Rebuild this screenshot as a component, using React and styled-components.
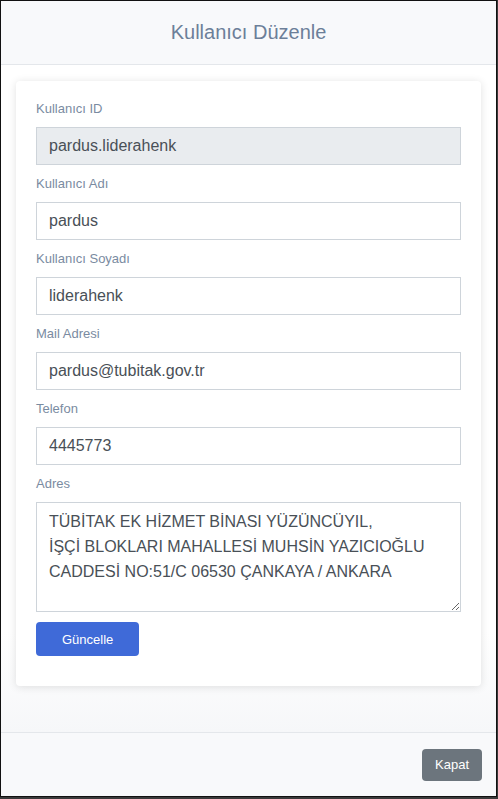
import React from 'react';
import styled, { createGlobalStyle } from 'styled-components';

const GlobalStyle = createGlobalStyle`
  html, body {
    margin: 0;
    padding: 0;
    background: #3a3a3a;
    font-family: "Liberation Sans", Arial, sans-serif;
  }
`;

const Modal = styled.div`
  width: 495px;
  height: 795px;
  background: #fff;
  border: 1px solid #111;
  display: flex;
  flex-direction: column;
  overflow: hidden;
`;

const Header = styled.div`
  height: 63px;
  flex: none;
  background: #f8f9fb;
  border-bottom: 1px solid #e4e7eb;
  display: flex;
  align-items: center;
  justify-content: center;
`;

const Title = styled.h2`
  margin: 0;
  font-size: 20px;
  font-weight: 400;
  color: #6c7f99;
`;

const Body = styled.div`
  flex: 1;
  min-height: 0;
  padding: 16px 15px 0 15px;
  background: linear-gradient(#fff 85%, #f6f7f9);
`;

const Card = styled.form`
  background: #fff;
  border-radius: 4px;
  box-shadow: 0 1px 8px rgba(0, 0, 0, 0.12);
  padding: 18px 20px 30px 20px;
  display: flex;
  flex-direction: column;
  align-items: flex-start;
`;

const Field = styled.div`
  align-self: stretch;
  display: flex;
  flex-direction: column;
  margin-bottom: ${({ last }) => (last ? 10 : 9)}px;
`;

const Label = styled.label`
  font-size: 13px;
  line-height: 20px;
  color: #7a8ba1;
  margin-bottom: 8px;
`;

const Input = styled.input`
  box-sizing: border-box;
  height: 38px;
  width: 100%;
  padding: 0 12px;
  font-family: inherit;
  font-size: 16px;
  color: #495057;
  background: ${({ disabled }) => (disabled ? '#e9ecef' : '#fff')};
  border: 1px solid #ced4da;
  border-radius: 0;
  outline: none;
`;

const TextArea = styled.textarea`
  box-sizing: border-box;
  height: 110px;
  width: 100%;
  padding: 6px 12px;
  font-family: inherit;
  font-size: 16px;
  line-height: 25px;
  color: #495057;
  border: 1px solid #ced4da;
  border-radius: 0;
  outline: none;
  resize: vertical;
`;

const Button = styled.button`
  height: ${({ h }) => h}px;
  padding: 0 ${({ px }) => px}px;
  border: none;
  border-radius: 4px;
  background: ${({ bg }) => bg};
  color: #fff;
  font-family: inherit;
  font-size: 13px;
  cursor: pointer;
`;

const Footer = styled.div`
  height: 63px;
  flex: none;
  background: #f8f9fb;
  border-top: 1px solid #e4e7eb;
  display: flex;
  align-items: center;
  justify-content: flex-end;
  padding: 0 14px;
`;

const fields = [
  { label: 'Kullanıcı ID', value: 'pardus.liderahenk', disabled: true },
  { label: 'Kullanıcı Adı', value: 'pardus' },
  { label: 'Kullanıcı Soyadı', value: 'liderahenk' },
  { label: 'Mail Adresi', value: 'pardus@tubitak.gov.tr' },
  { label: 'Telefon', value: '4445773' },
];

const address =
  'TÜBİTAK EK HİZMET BİNASI YÜZÜNCÜYIL,\nİŞÇİ BLOKLARI MAHALLESİ MUHSİN YAZICIOĞLU\nCADDESİ NO:51/C 06530 ÇANKAYA / ANKARA';

export default function App() {
  return (
    <>
      <GlobalStyle />
      <Modal>
        <Header>
          <Title>Kullanıcı Düzenle</Title>
        </Header>
        <Body>
          <Card onSubmit={(e) => e.preventDefault()}>
            {fields.map((f) => (
              <Field key={f.label}>
                <Label>{f.label}</Label>
                <Input defaultValue={f.value} disabled={f.disabled} />
              </Field>
            ))}
            <Field last>
              <Label>Adres</Label>
              <TextArea defaultValue={address} />
            </Field>
            <Button type="submit" h={34} px={26} bg="#3f6ad8">Güncelle</Button>
          </Card>
        </Body>
        <Footer>
          <Button type="button" h={32} px={13} bg="#6c757d">Kapat</Button>
        </Footer>
      </Modal>
    </>
  );
}
